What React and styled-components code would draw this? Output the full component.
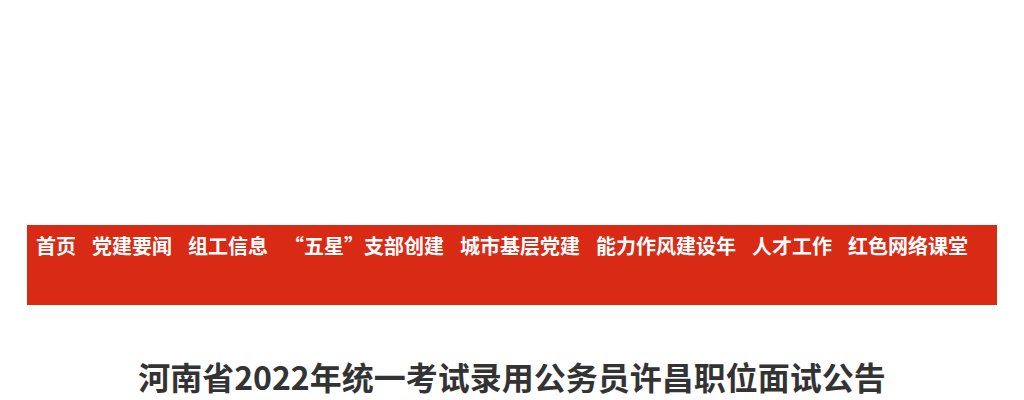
import React from "react";
import styled, { createGlobalStyle } from "styled-components";

const Global = createGlobalStyle`
  html, body { margin: 0; padding: 0; background: #fff; }
  body { font-family: "Noto Sans CJK SC", "Liberation Sans", sans-serif; }
  * { box-sizing: border-box; }
`;

const Page = styled.div`
  width: 970px;
  margin: 0 auto;
  padding-top: 225px;
`;

const NavBar = styled.nav`
  height: 80px;
  background: #d92a16;
  display: flex;
  align-items: flex-start;
  gap: 16px;
  padding: 6px 9px 0;
`;

const NavItem = styled.a`
  color: #fff;
  font-size: 20px;
  font-weight: 700;
  line-height: 30px;
  text-decoration: none;
  white-space: nowrap;
`;

const Title = styled.h1`
  margin: 0;
  padding-top: 48px;
  text-align: center;
  color: #333;
  font-size: 32px;
  font-weight: 700;
  line-height: 46px;
`;

const items = [
  "首页",
  "党建要闻",
  "组工信息",
  "“五星”支部创建",
  "城市基层党建",
  "能力作风建设年",
  "人才工作",
  "红色网络课堂",
];

export default function App() {
  return (
    <>
      <Global />
      <Page>
        <NavBar>
          {items.map((t) => (
            <NavItem key={t} href="#">{t}</NavItem>
          ))}
        </NavBar>
        <Title>河南省2022年统一考试录用公务员许昌职位面试公告</Title>
      </Page>
    </>
  );
}
